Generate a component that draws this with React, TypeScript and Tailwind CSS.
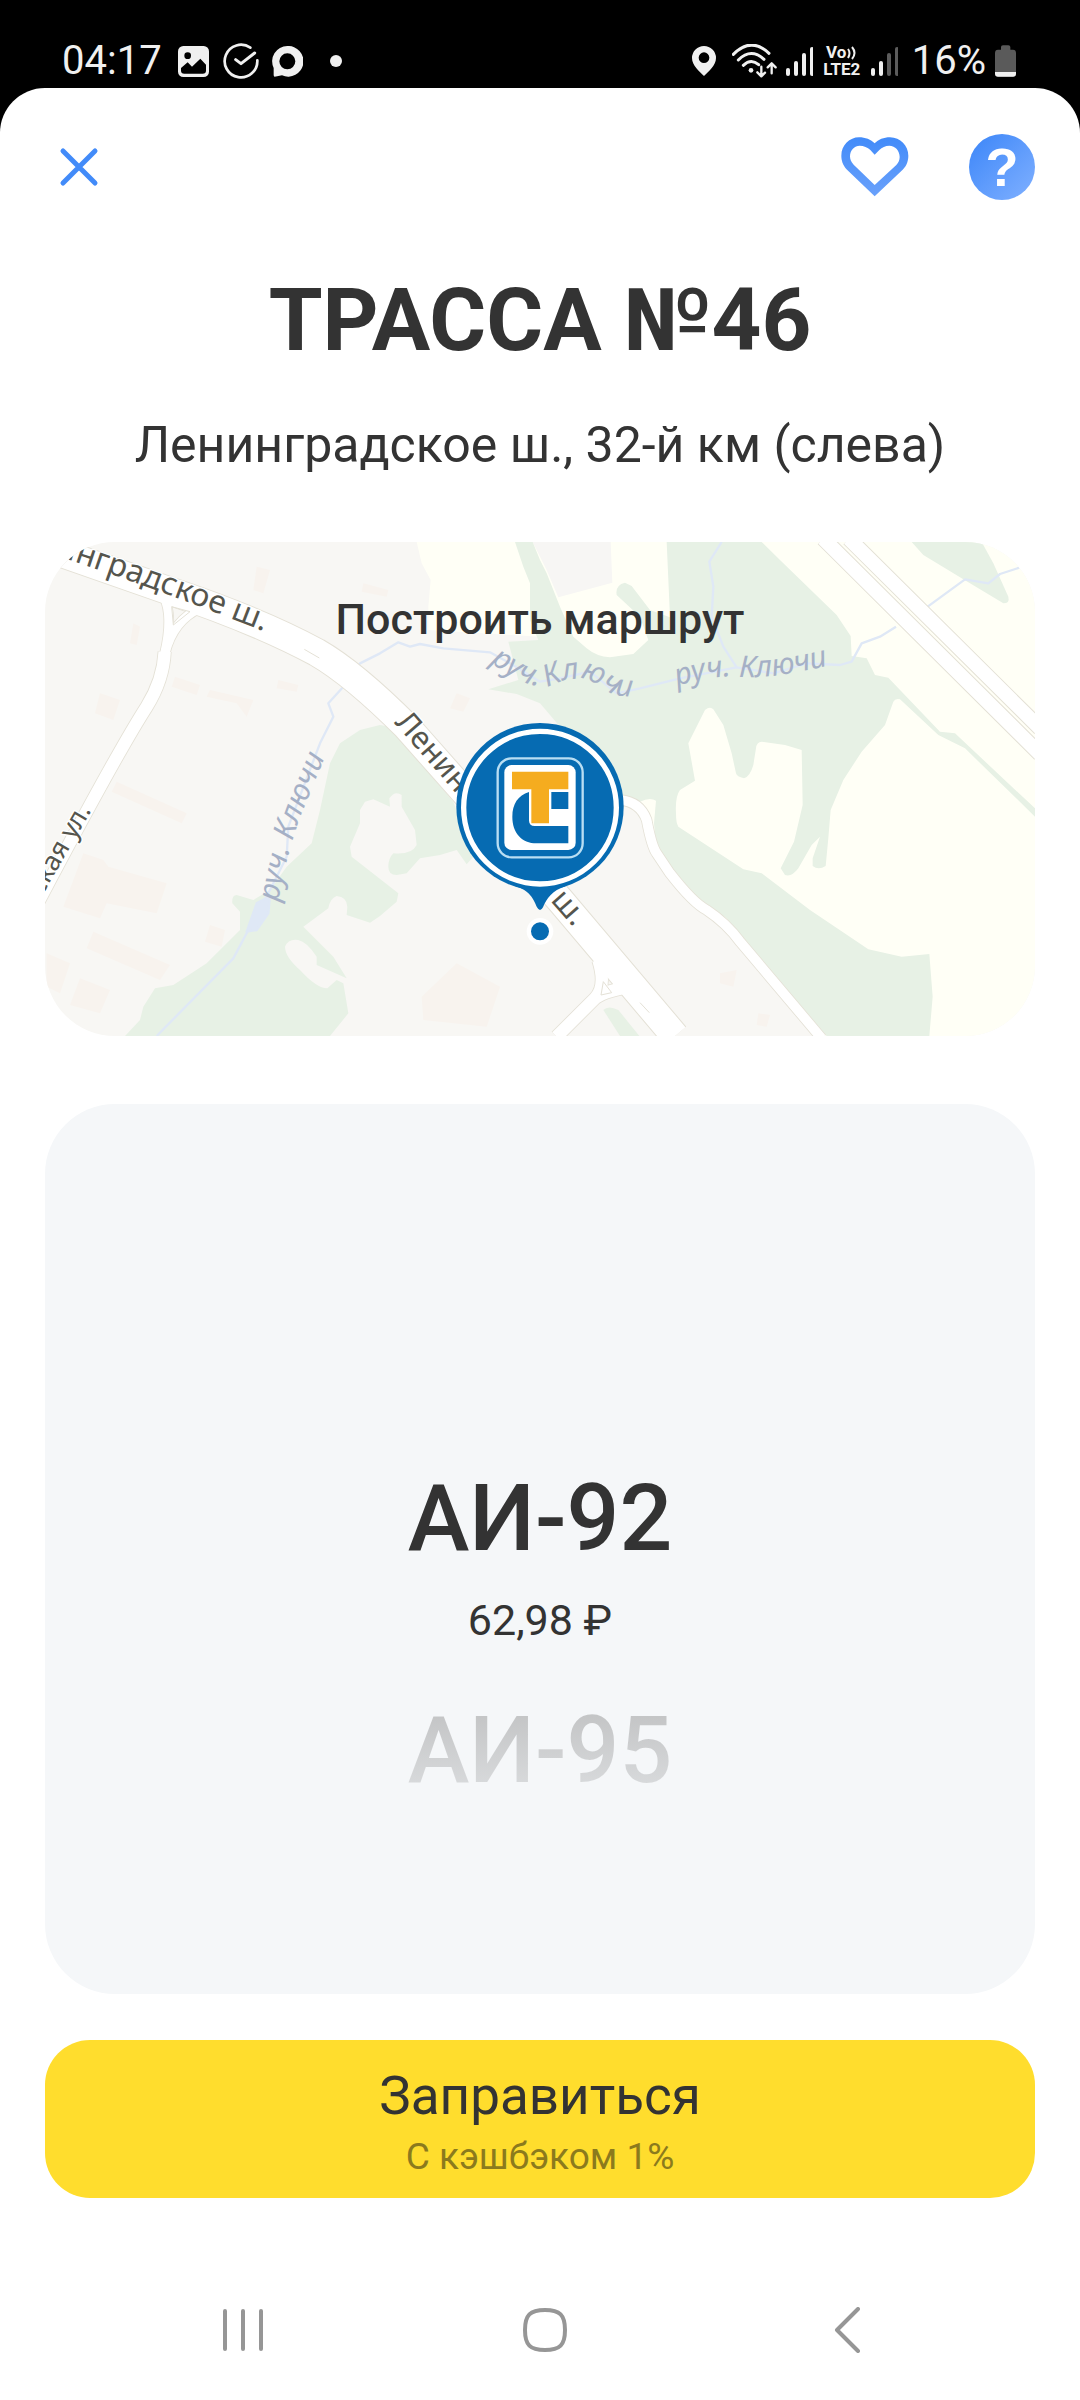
import React from 'react';

const fuels = [
    { id: 'ai92', name: 'АИ-92', price: '62,98 ₽' },
    { id: 'ai95', name: 'АИ-95', price: '' },
];

const SignalBars: React.FC<{ level: number }> = ({ level }) => (
    <svg className="w-[27px] h-[30px]" viewBox="0 0 27 30" strokeWidth="4" strokeLinecap="round">
        {[24, 17, 9, 3].map((top, idx) => (
            <path key={idx} d={`M${2 + idx * 8} ${top}V28`} stroke={idx < level ? '#f0f0f0' : '#5c5c5c'} />
        ))}
    </svg>
);

const StatusBar: React.FC = () => (
    <div className="h-[88px] pt-[36px] pl-[62px] pr-[64px] flex items-start justify-between text-[#f0f0f0]">
        <div className="flex items-center h-[50px]">
            <span className="text-[40px] leading-[50px] w-[116px]">04:17</span>
            {/* Gallery */}
            <svg className="w-[31px] h-[31px]" viewBox="0 0 93 93">
                <rect width="93" height="93" rx="16" fill="#f0f0f0" />
                <circle cx="29" cy="29" r="10" fill="#000" />
                <path d="M9 74V66L29 49L42 62L67 38L84 56V74Q84 83 74 83H19Q9 83 9 74Z" fill="#000" />
            </svg>
            {/* Task done */}
            <svg className="w-[36px] h-[36px] ml-[14px]" viewBox="0 0 108 108" fill="none" stroke="#f0f0f0" strokeWidth="8" strokeLinecap="round" strokeLinejoin="round">
                <path d="M82 14A49 49 0 1 0 103 52" />
                <path d="M38 50L54 62L95 30" strokeWidth="9" />
            </svg>
            {/* Chat */}
            <svg className="w-[31px] h-[31px] ml-[13px]" viewBox="0 0 93 93">
                <path d="M46 0A46 46 0 1 1 30 88L8 92Q5 92 5 87V66A46 46 0 0 1 46 0ZM46 22A24 24 0 1 0 46 70A24 24 0 1 0 46 22Z" fill="#f0f0f0" fillRule="evenodd" />
            </svg>
            <span className="w-3 h-3 rounded-full bg-[#f0f0f0] ml-[27px]"></span>
        </div>

        <div className="flex items-center h-[50px]">
            {/* Location */}
            <svg className="w-[24px] h-[30px]" viewBox="0 0 72 90">
                <path d="M36 0A36 36 0 0 1 72 36C72 58 50 76 36 90C22 76 0 58 0 36A36 36 0 0 1 36 0ZM36 19A16 16 0 1 0 36 51A16 16 0 1 0 36 19Z" fill="#f0f0f0" fillRule="evenodd" />
            </svg>
            {/* Wi-Fi with traffic arrows */}
            <svg className="w-[45px] h-[34px] ml-[16px]" viewBox="0 0 135 102" fill="none" stroke="#f0f0f0" strokeWidth="9" strokeLinecap="round" strokeLinejoin="round">
                <path d="M4 31Q57 -23 111 28M19 48Q57 10 96 46M34 64Q57 42 80 62" />
                <circle cx="57" cy="79" r="7" fill="#f0f0f0" stroke="none" />
                <path d="M88 68V96M76 85L88 97L99 86M119 88V60M107 70L119 58L131 70" strokeWidth="7" />
            </svg>
            <span className="ml-[9px]"><SignalBars level={4} /></span>
            <span className="ml-[9px] w-[40px] flex flex-col items-center text-[17px] leading-[17px] font-bold">
                <span className="flex items-center">
                    Vo
                    <svg className="w-[11px] h-[14px]" viewBox="0 0 11 14" fill="none" stroke="#f0f0f0" strokeWidth="2">
                        <path d="M2 3Q5 7 2 12M6 1Q11 7 6 13" />
                    </svg>
                </span>
                <span>LTE2</span>
            </span>
            <span className="ml-[9px]"><SignalBars level={2} /></span>
            <span className="text-[40px] leading-[50px] ml-[14px]">16%</span>
            <svg className="w-[21px] h-[32px] ml-[9px]" viewBox="0 0 63 96">
                <path d="M18 6Q18 1 24 1H40Q46 1 46 6V14H54Q63 14 63 24V85Q63 95 54 95H9Q0 95 0 85V24Q0 14 9 14H18Z" fill="#5a5a5a" />
                <path d="M0 81H63V86Q63 95 54 95H9Q0 95 0 86Z" fill="#f0f0f0" />
            </svg>
        </div>
    </div>
);

const StationMarker: React.FC = () => (
    <g transform="translate(1200 510)">
        <circle cx="300" cy="694" r="40" fill="#fff" />
        <circle cx="300" cy="694" r="27" fill="#066bb2" />
        <circle cx="300" cy="320" r="251" fill="#066bb2" />
        <path d="M225 558C270 572 280 596 291 622Q300 638 309 622C320 596 335 572 378 558Z" fill="#066bb2" />
        <circle cx="300" cy="323" r="229" fill="none" stroke="#fff" strokeWidth="16" />
        <rect x="173" y="175" width="255" height="297" rx="42" fill="none" stroke="#b9def3" strokeWidth="7" />
        <rect x="193" y="195" width="214" height="255" rx="22" fill="#fff" />
        <path d="M216 215H385V268H327V370H274V268H216Z" fill="#f5ac1f" />
        <path d="M385 430H290C245 430 217 398 217 350C217 312 234 286 267 276V362Q268 378 284 378H385ZM334 276H385V327H334Z" fill="#066bb2" />
    </g>
);

const RouteMap: React.FC = () => (
    <svg className="absolute inset-0 w-full h-full" viewBox="15 36 2970 1482" preserveAspectRatio="xMidYMid slice" aria-hidden="true">
        <defs>
            <path id="road-west" d="M46 76Q340 172 720 323" />
            <path id="road-main" d="M1062 578L1640 1237" />
            <path id="street" d="M6 1098L190 780" />
            <path id="brook-left" d="M714 1116Q742 960 785 850L900 570" />
            <path id="brook-mid" d="M1350 398C1420 440 1460 475 1530 468C1590 440 1640 436 1690 475C1720 500 1760 508 1880 488" />
            <path id="brook-right" d="M1912 468Q2000 440 2080 438Q2200 455 2450 384" />
        </defs>

        <rect x="15" y="36" width="2970" height="1482" fill="#f8f7f4" />

        {/* Buildings */}
        <g fill="#f8f3ee">
            <path d="M180 490L240 510L220 570L165 550ZM405 440L480 465L470 495L395 470ZM510 480L640 510L620 560L590 520L500 500Z" />
            <path d="M230 755L440 850L425 880L215 785ZM130 970L190 990L205 1010L380 1060L350 1150L200 1120L180 1165L70 1130Z" />
            <path d="M160 1205L390 1305L360 1350L140 1255ZM20 1270L90 1300L60 1390L20 1370ZM120 1345L210 1380L180 1450L90 1425Z" />
            <path d="M510 1185L555 1200L545 1250L495 1235ZM1250 1300L1380 1370L1340 1490L1150 1470L1145 1400ZM650 110L690 120L670 190L640 180ZM280 280L300 290L290 345L270 340ZM715 450L775 465L770 485L710 475Z" />
            <path d="M970 160L1045 180L1040 200L965 185ZM1250 490L1290 505L1270 545L1230 535ZM2040 1330L2090 1320L2080 1370L2040 1360ZM2155 1450L2190 1455L2180 1490L2150 1485Z" />
        </g>

        {/* Fields */}
        <path d="M1130 36H2985V1518H2350L1800 860L1500 320L1165 300V230L1172 150L1145 100Z" fill="#fffff6" />
        <path d="M1478 36H1712L1717 158L1555 202L1520 120Z" fill="#f7f6f4" />

        {/* Forest */}
        <g fill="#e7f1e5">
            <path d="M1425 36H1478L1500 90L1520 130L1560 230L1600 320L1640 355Q1670 380 1710 382L1780 372L1825 330L1800 260L1730 195Q1725 165 1755 158L1775 168L1830 240L1890 262L1880 36H2165L2220 90L2390 255L2432 318L2435 378L2480 385L2505 435L2545 443L2700 605L2745 610L2985 835V860L2775 655L2695 615L2580 508Q2565 505 2560 515L2535 585L2465 665L2410 750L2372 840L2365 925L2357 1008Q2335 1022 2318 1008V985L2340 920L2315 945L2275 1015Q2255 1042 2235 1035L2222 1015L2262 935L2288 825L2285 660L2235 645L2165 635Q2150 635 2148 655L2140 705Q2130 740 2112 745Q2090 740 2088 730L2075 670L2050 585L2020 538Q2010 528 1995 540L1945 640L1965 752L1920 780Q1905 800 1908 850Q1908 880 1915 890L2110 1018L2165 1030L2310 1140L2485 1258L2585 1280L2668 1272L2678 1400L2668 1518H2360L2060 1165L1960 1100L1850 970L1842 880L1848 812Q1830 800 1800 815L1750 800L1660 740L1560 590L1500 520L1430 492L1345 478L1435 450L1405 335L1495 330L1470 270V160L1450 110Z" />
            <path d="M2615 36H2825L2860 100L2905 200Q2910 220 2890 220L2765 145L2650 75Z" />
            <path d="M1690 1440Q1705 1425 1735 1440L1798 1518H1740Z" />
            <path d="M1020 585L960 600L900 640L870 700L840 840L815 940L740 1010L690 1080L640 1110L590 1095Q575 1095 577 1120L600 1145V1200L500 1300L400 1365L345 1375L310 1430L300 1470L255 1518H870L925 1450L910 1360L890 1350L862 1375Q830 1375 780 1320Q735 1280 735 1250Q745 1225 775 1230Q800 1235 830 1280V1305L920 1345L880 1280L790 1190L865 1135Q870 1105 890 1098Q920 1100 922 1130L920 1155L990 1178L1020 1158L1070 1115L1075 1090L935 980L930 950L960 880V840L975 815L1000 808L1050 830L1048 805Q1065 780 1085 795V830L1125 900L1130 945Q1115 975 1060 970Q1045 985 1045 1010Q1045 1035 1070 1035L1100 1030L1140 985L1200 975L1250 960L1280 1003L1300 980L1240 815L1050 590Z" />
        </g>

        {/* Brooks */}
        <g fill="none" stroke="#dfe8f6" strokeWidth="7" strokeLinejoin="round">
            <path d="M350 1518L580 1285L625 1200L690 1080L740 980L745 890L840 640L880 560L865 520L910 470L960 400L1020 370L1075 337L1110 350L1140 342L1210 355L1350 367L1410 400L1500 455L1560 445L1650 425L1730 490L1800 475L1920 445L2090 412L2200 430L2300 400L2400 405L2435 395L2465 340L2520 320L2568 290" />
            <path d="M2660 232L2775 148L2845 160L2880 132L2938 113M2045 36L2008 95L2020 170L2015 260L2050 350L2090 412" />
            <path d="M690 1098L650 1120L620 1205L650 1200L685 1150Z" fill="#dfe8f6" />
        </g>

        {/* Road casings, then road surface */}
        <g fill="none" strokeLinejoin="round">
            <g stroke="#e4e1d6">
                <path d="M-20 40L380 180Q650 270 830 367Q940 430 1100 590L1560 1110L1905 1518" strokeWidth="88" />
                <path d="M372 200Q400 260 374 370M480 235Q400 270 375 370" strokeWidth="32" />
                <path d="M374 365Q370 450 320 530Q230 670 -10 1125" strokeWidth="42" />
                <path d="M1675 1290Q1700 1370 1665 1405L1550 1520M1780 1370Q1700 1380 1665 1405" strokeWidth="42" />
                <path d="M1740 810Q1800 815 1820 870Q1835 950 1850 970L1890 1030Q1960 1120 2000 1140Q2060 1180 2100 1235L2345 1525" strokeWidth="34" />
                <path d="M2350 26L3000 672M2427 26L3000 595" strokeWidth="48" />
            </g>
            <g stroke="#fff">
                <path d="M-20 40L380 180Q650 270 830 367Q940 430 1100 590L1560 1110L1905 1518" strokeWidth="82" />
                <path d="M372 200Q400 260 374 370M480 235Q400 270 375 370" strokeWidth="27" />
                <path d="M374 365Q370 450 320 530Q230 670 -10 1125" strokeWidth="37" />
                <path d="M1675 1290Q1700 1370 1665 1405L1550 1520M1780 1370Q1700 1380 1665 1405" strokeWidth="37" />
                <path d="M1740 810Q1800 815 1820 870Q1835 950 1850 970L1890 1030Q1960 1120 2000 1140Q2060 1180 2100 1235L2345 1525" strokeWidth="29" />
                <path d="M2350 26L3000 672M2427 26L3000 595" strokeWidth="42" />
            </g>
            <path d="M793 358L838 384M1800 1418L1828 1448M395 230L450 245L400 285ZM1690 1355L1715 1388L1683 1395Z" stroke="#e4e1d6" strokeWidth="3" />
        </g>

        {/* Labels */}
        <g className="font-['Noto_Sans']" fill="#55554d" stroke="#fff" strokeWidth="8" paintOrder="stroke" strokeLinejoin="round">
            <text fontSize="95"><textPath href="#road-west">инградское ш.</textPath></text>
            <text fontSize="92"><textPath href="#road-main">Ленинградское ш.</textPath></text>
            <text fontSize="80"><textPath href="#street">ская ул.</textPath></text>
        </g>
        <g className="font-['Noto_Sans'] italic" fill="#a5b0c6" fontSize="90">
            <text><textPath href="#brook-left">руч. Ключи</textPath></text>
            <text><textPath href="#brook-mid">руч. Ключи</textPath></text>
            <text><textPath href="#brook-right">руч. Ключи</textPath></text>
        </g>

        <StationMarker />
    </svg>
);

export default function App() {
    const [fuel, setFuel] = React.useState('ai92');

    return (
        <div className="min-h-screen bg-black flex flex-col font-[Roboto,sans-serif] text-[#333333]">
            <StatusBar />

            <div className="flex-1 bg-white rounded-t-[45px] px-[45px] flex flex-col">
                {/* Header */}
                <header className="pt-[46px] flex items-center justify-between">
                    <button aria-label="Закрыть" className="w-[68px] h-[66px] flex items-center justify-center">
                        <svg className="w-[40px] h-[40px]" viewBox="0 0 40 40" stroke="#428bf9" strokeWidth="5" strokeLinecap="round">
                            <path d="M4 4L36 36M36 4L4 36" />
                        </svg>
                    </button>
                    <div className="flex items-center gap-[60px]">
                        <button aria-label="В избранное" className="h-[66px] flex items-center">
                            <svg className="w-[68px] h-[60px]" viewBox="62 82 204 180">
                                <defs>
                                    <linearGradient id="heart" x1="0" y1="0" x2="0" y2="1">
                                        <stop offset="0" stopColor="#428bf9" />
                                        <stop offset="1" stopColor="#6aa1fb" />
                                    </linearGradient>
                                </defs>
                                <path fill="url(#heart)" fillRule="evenodd" d="M163 260L80 180C66 165 63 150 63 138C63 107 88 83 116 83C135 83 152 90 163 101C174 90 190 83 209 83C240 83 264 108 264 138C264 152 260 167 247 180ZM163 226L100 165C92 157 89 148 89 140C89 121 103 108 118 108C130 108 142 113 150 121L163 135L177 121C185 113 195 108 207 108C225 108 238 123 238 142C238 152 234 160 228 166Z" />
                            </svg>
                        </button>
                        <button aria-label="Помощь" className="w-[66px] h-[66px] rounded-full bg-linear-to-br from-[#3a85f8] to-[#7fb0ff] text-white font-['Liberation_Sans'] text-[54px] leading-[66px] font-bold text-center">
                            ?
                        </button>
                    </div>
                </header>

                <h1 className="mt-[68px] text-[87px] leading-[104px] font-bold text-center">ТРАССА №46</h1>
                <p className="mt-[43px] text-[50px] leading-[60px] text-center">Ленинградское ш., 32-й км (слева)</p>

                <button className="relative mt-[67px] h-[494px] rounded-[70px] overflow-hidden flex justify-center items-start pt-[53px]">
                    <RouteMap />
                    <span className="relative text-[43px] leading-[48px] font-medium">Построить маршрут</span>
                </button>

                {/* Fuel picker */}
                <fieldset className="mt-[68px] min-h-[890px] rounded-[70px] bg-[#f5f7f9] pt-[365px] flex flex-col items-center gap-[51px]">
                    {fuels.map((item) => (
                        <label key={item.id} className="relative flex flex-col items-center gap-[21px]">
                            <input
                                type="radio"
                                name="fuel"
                                value={item.id}
                                checked={fuel === item.id}
                                onChange={() => setFuel(item.id)}
                                className="sr-only"
                            />
                            <span className={`text-[93px] leading-[100px] font-medium ${fuel === item.id ? '' : 'bg-linear-to-b from-[#c0c1c2] to-[#dcdee0] bg-clip-text text-transparent'}`}>
                                {item.name}
                            </span>
                            {item.price && <span className="text-[43px] leading-[60px]">{item.price}</span>}
                        </label>
                    ))}
                </fieldset>

                <button className="mt-[46px] h-[158px] rounded-[45px] bg-[#ffdd2d] pt-[26px] pb-[16px] flex flex-col items-center justify-between">
                    <span className="text-[53px] leading-[60px]">Заправиться</span>
                    <span className="text-[37px] leading-[50px] text-[#8b7a1d]">С кэшбэком 1%</span>
                </button>
            </div>

            {/* System navigation */}
            <nav className="bg-white pt-[65px]">
                <div className="h-[137px] pb-[4px] pl-[92px] pr-[82px] grid grid-cols-3 items-center justify-items-center">
                    <button aria-label="Недавние">
                        <svg className="w-[44px] h-[44px]" viewBox="0 0 44 44" stroke="#969696" strokeWidth="4" strokeLinecap="round">
                            <path d="M4 3V41M22 3V41M40 3V41" />
                        </svg>
                    </button>
                    <button aria-label="Домой">
                        <svg className="w-[44px] h-[44px]" viewBox="0 0 44 44" fill="none" stroke="#969696" strokeWidth="4">
                            <path d="M22 2C37 2 42 7 42 22C42 37 37 42 22 42C7 42 2 37 2 22C2 7 7 2 22 2Z" />
                        </svg>
                    </button>
                    <button aria-label="Назад">
                        <svg className="w-[28px] h-[46px]" viewBox="0 0 28 46" fill="none" stroke="#969696" strokeWidth="4" strokeLinecap="round" strokeLinejoin="round">
                            <path d="M25 2L4 23L25 44" />
                        </svg>
                    </button>
                </div>
            </nav>
        </div>
    );
}
